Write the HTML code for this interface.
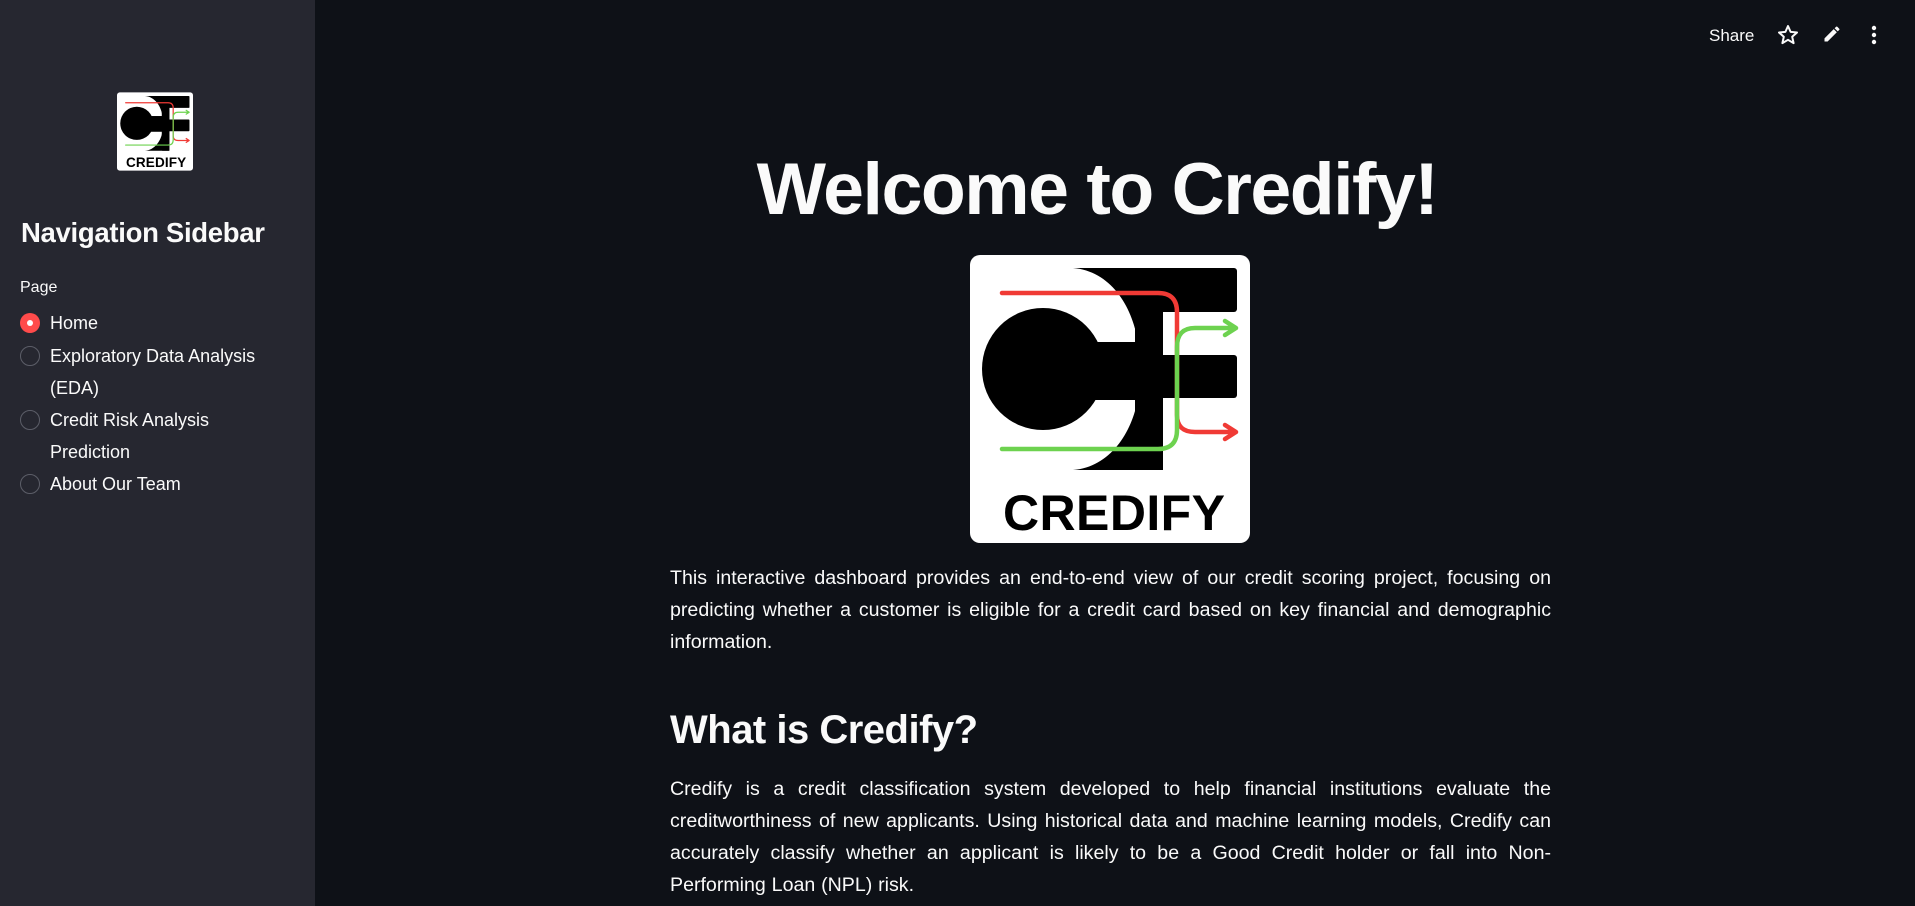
<!DOCTYPE html>
<html><head><meta charset="utf-8"><style>
*{margin:0;padding:0;box-sizing:border-box}
body{width:1915px;height:906px;overflow:hidden;background:#0e1117;font-family:"Liberation Sans",sans-serif;color:#fafafa;position:relative}
#sb{position:absolute;left:0;top:0;width:315px;height:906px;background:#262730}
.abs{position:absolute}
.radio{position:absolute;left:20px;width:20px;height:20px;border-radius:50%;border:1px solid #5c5e68}
.radio.on{background:#ff4b4b;border:none}
.radio.on::after{content:"";position:absolute;left:7px;top:7px;width:6px;height:6px;border-radius:50%;background:#fff}
.it{position:absolute;left:50px;font-size:18px;line-height:32px}
p{font-size:19.6px;line-height:31.8px;text-align:justify;letter-spacing:0}
</style></head><body>
<div id="sb">
<svg class="abs" style="left:117px;top:92px" width="76" height="79" viewBox="0 0 280 288"><use href="#lg"/></svg>
<div class="abs" style="left:21px;top:217px;font-size:27.5px;font-weight:bold;letter-spacing:-0.3px">Navigation Sidebar</div>
<div class="abs" style="left:20px;top:279px;font-size:16px">Page</div>
<div class="radio on" style="top:313px"></div><div class="it" style="top:307px">Home</div>
<div class="radio" style="top:346px"></div><div class="it" style="top:340px">Exploratory Data Analysis<br>(EDA)</div>
<div class="radio" style="top:410px"></div><div class="it" style="top:404px">Credit Risk Analysis<br>Prediction</div>
<div class="radio" style="top:474px"></div><div class="it" style="top:468px">About Our Team</div>
</div>
<div class="abs" style="left:1709px;top:26px;font-size:17px">Share</div>
<svg class="abs" style="left:1776px;top:23px" width="24" height="24" viewBox="0 0 24 24"><path d="M12 3l2.6 5.9 6.4.6-4.8 4.3 1.4 6.3L12 16.8 6.4 20.1l1.4-6.3L3 9.5l6.4-.6z" fill="none" stroke="#fafafa" stroke-width="2" stroke-linejoin="round"/></svg>
<svg class="abs" style="left:1822px;top:24px" width="20" height="20" viewBox="0 0 24 24"><path d="M3 17.25V21h3.75L17.8 9.94l-3.75-3.75L3 17.25zM20.7 7.04a1 1 0 000-1.41l-2.34-2.34a1 1 0 00-1.41 0l-1.83 1.83 3.75 3.75 1.83-1.83z" fill="#fafafa"/></svg>
<svg class="abs" style="left:1864px;top:24px" width="20" height="22" viewBox="0 0 20 22"><circle cx="10" cy="4" r="2.2" fill="#fafafa"/><circle cx="10" cy="11" r="2.2" fill="#fafafa"/><circle cx="10" cy="18" r="2.2" fill="#fafafa"/></svg>

<div class="abs" style="left:297px;width:1600px;top:144px;text-align:center;font-size:73.5px;font-weight:bold;letter-spacing:-1.5px;line-height:90px">Welcome to Credify!</div>

<svg class="abs" style="left:970px;top:255px" width="280" height="288" viewBox="0 0 280 288">
<defs><g id="lg">
<rect x="0" y="0" width="280" height="288" rx="10" fill="#fff"/>
<rect x="160" y="13" width="107" height="44" rx="3" fill="#000"/>
<rect x="165" y="13" width="28" height="202" rx="3" fill="#000"/>
<rect x="160" y="100" width="107" height="43" rx="3" fill="#000"/>
<path d="M103,13 C140,16 162,50 168,87 L193,87 L193,13Z" fill="#000"/>
<path d="M103,215 C140,212 162,178 168,143 L193,143 L193,215Z" fill="#000"/>
<circle cx="73" cy="114" r="61" fill="#000"/>
<rect x="73" y="87" width="120" height="58" fill="#000"/>
<path d="M32,38 H188 Q207,38 207,57 V160 Q207,177 225,177 H265 M255,170 L266,177 L255,184" fill="none" stroke="#f03a35" stroke-width="4.5" stroke-linecap="round" stroke-linejoin="round"/>
<path d="M32,194 H188 Q207,194 207,175 V92 Q207,73 225,73 H265 M255,66 L266,73 L255,80" fill="none" stroke="#6dd24f" stroke-width="4.5" stroke-linecap="round" stroke-linejoin="round"/>
<text x="33" y="275" font-family="Liberation Sans,sans-serif" font-weight="bold" font-size="50" textLength="222" lengthAdjust="spacing" fill="#000">CREDIFY</text>
</g></defs>
<use href="#lg"/>
</svg>

<div class="abs" style="left:670px;top:563px;width:881px">
<p>This interactive dashboard provides an end-to-end view of our credit scoring project, focusing on predicting whether a customer is eligible for a credit card based on key financial and demographic information.</p>
<div style="font-size:40px;font-weight:bold;margin-top:47px;line-height:50px;letter-spacing:-0.5px">What is Credify?</div>
<p style="margin-top:19px;word-spacing:0.4px">Credify is a credit classification system developed to help financial institutions evaluate the creditworthiness of new applicants. Using historical data and machine learning models, Credify can accurately classify whether an applicant is likely to be a Good Credit holder or fall into Non-Performing Loan (NPL) risk.</p>
</div>
</body></html>
